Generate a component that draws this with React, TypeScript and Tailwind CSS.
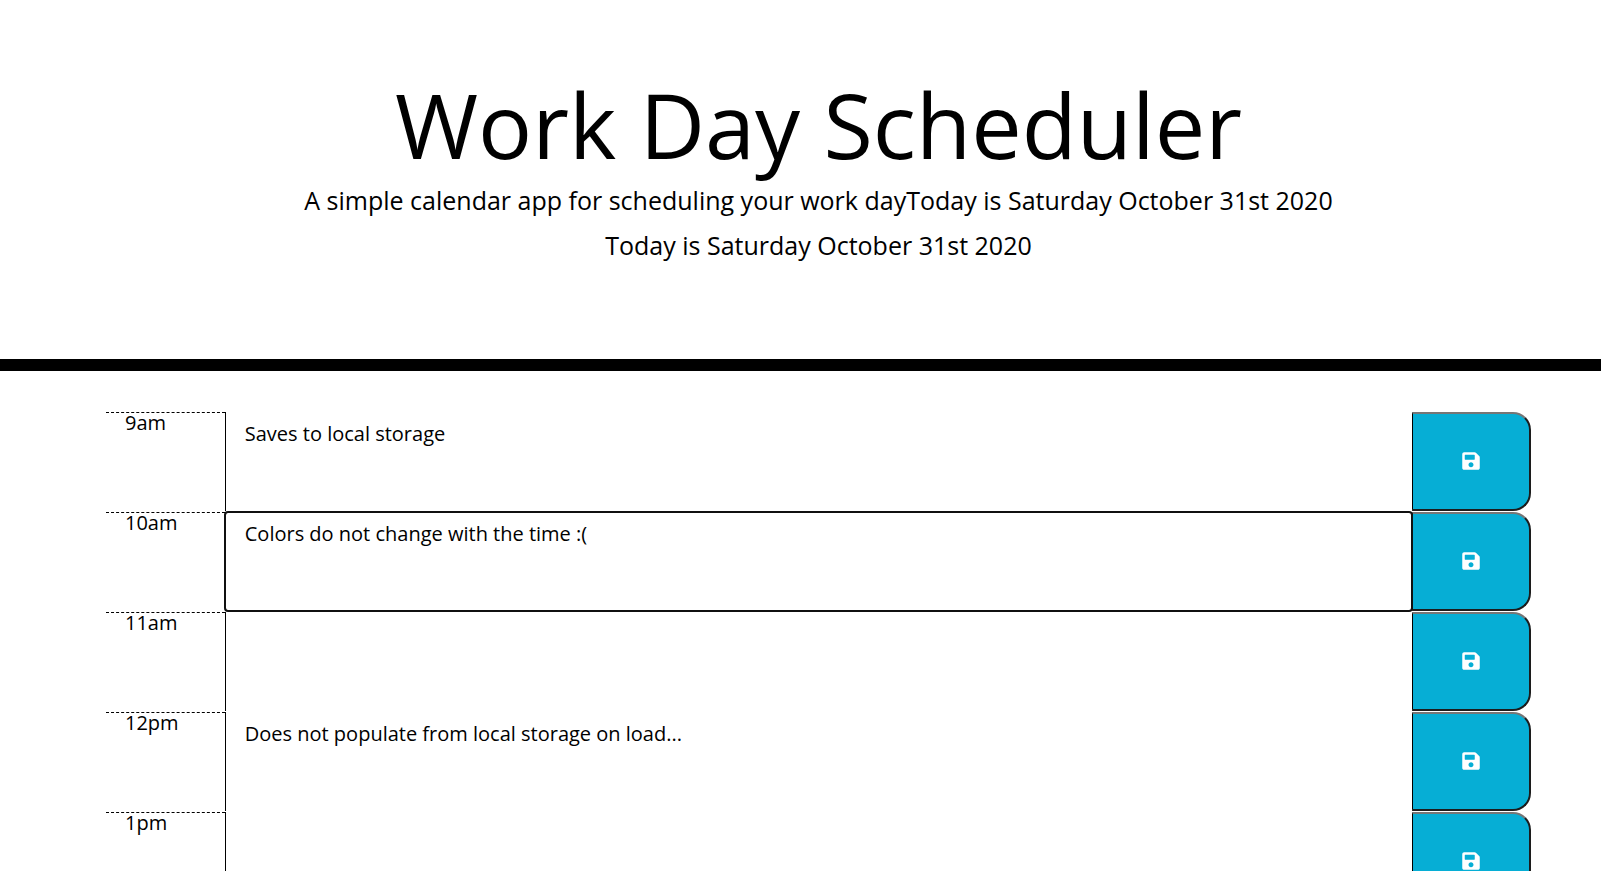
import { FaSave } from "react-icons/fa";

const today = "Today is Saturday October 31st 2020";

const slots = [
  { hour: "9am", note: "Saves to local storage" },
  { hour: "10am", note: "Colors do not change with the time :(", active: true },
  { hour: "11am", note: "" },
  { hour: "12pm", note: "Does not populate from local storage on load..." },
  { hour: "1pm", note: "" },
];

function TimeBlock({ hour, note, active = false }: { hour: string; note: string; active?: boolean }) {
  const id = `note-${hour}`;
  return (
    <div className="mb-px grid h-[99px] shrink-0 grid-cols-12">
      <label htmlFor={id} className="border-t border-dashed border-black pl-[19px] leading-5">
        {hour}
      </label>
      <textarea
        id={id}
        defaultValue={note}
        className={
          active
            ? "relative z-10 col-span-10 resize-none rounded-[3px] border-l border-black px-[19px] py-[7px] leading-[30px] outline-2 -outline-offset-1 outline-[#101010]"
            : "col-span-10 resize-none border-l border-black px-[19px] py-[7px] leading-[30px] outline-none"
        }
      />
      <button
        type="button"
        aria-label={`Save ${hour}`}
        className="flex items-center justify-center rounded-r-[18px] border-2 border-l border-[#1c1c1c] border-t-[#767676] border-l-black bg-[#06aed5] pb-[2px] text-white"
      >
        <FaSave size={20} />
      </button>
    </div>
  );
}

export default function App() {
  return (
    <div className="h-screen overflow-hidden bg-white font-['Open_Sans',sans-serif] text-xl text-black">
      <header className="border-b-[12px] border-black pt-[70px] pb-[91px] pl-9 text-center">
        <h1 className="text-[90px] leading-[108px]">Work Day Scheduler</h1>
        <p className="text-[25px] leading-[45px]">A simple calendar app for scheduling your work day{today}</p>
        <p className="text-[25px] leading-[45px]">{today}</p>
      </header>
      <main className="flex flex-col pt-[41px] pr-[70px] pl-[106px]">
        {slots.map((slot) => (
          <TimeBlock key={slot.hour} {...slot} />
        ))}
      </main>
    </div>
  );
}
